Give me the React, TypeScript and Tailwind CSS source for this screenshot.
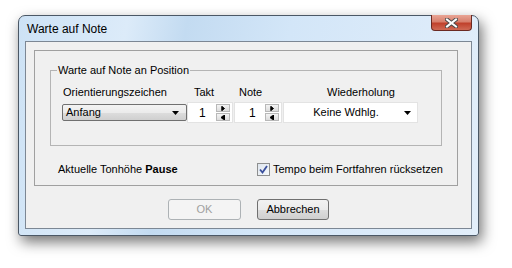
const font = "font-['Liberation_Sans',Arial,sans-serif]";

// kleiner Pfeil für Kombinationsfelder
const DropArrow = () => (
  <svg width="7" height="4" viewBox="0 0 7 4">
    <path d="M0 0 H7 L3.5 4 Z" fill="#000" />
  </svg>
);

const SpinButtons = () => (
  <div className="flex flex-col w-[14px] h-[17px] gap-[1px]">
    <div className="flex-1 border border-[#b8b8b8] bg-[linear-gradient(#f4f4f4,#dcdcdc)] flex items-center justify-center">
      <svg width="4" height="5" viewBox="0 0 4 5">
        <path d="M0 0 V5 M1 0.5 L3.5 2.5 L1 4.5 Z" stroke="#000" strokeWidth="1" fill="#000" />
      </svg>
    </div>
    <div className="flex-1 border border-[#b8b8b8] bg-[linear-gradient(#f4f4f4,#dcdcdc)] flex items-center justify-center">
      <svg width="4" height="5" viewBox="0 0 4 5">
        <path d="M3.5 0 V5 M2.5 0.5 L0 2.5 L2.5 4.5 Z" stroke="#000" strokeWidth="1" fill="#000" />
      </svg>
    </div>
  </div>
);

const SpinBox = ({ value, width, textPad }: { value: string; width: string; textPad: string }) => (
  <div className={`${width} h-[21px] bg-white border border-[#e3e3e3] flex items-center justify-between pr-[2px]`}>
    <span className={`${textPad} text-[12px] leading-[14px]`}>{value}</span>
    <SpinButtons />
  </div>
);

export default function App() {
  return (
    <div className={`w-[512px] h-[268px] bg-white overflow-hidden pt-[15px] pl-[18px] ${font} text-black`}>
      {/* Fenster */}
      <div className="w-[461px] h-[221px] border border-[#4b5866] rounded-t-[7px] rounded-b-[3px] shadow-[3px_6px_14px_rgba(0,0,0,0.55)] bg-[linear-gradient(100deg,#cde2f5_0%,#dcebf9_22%,#c3dbf1_34%,#d3e6f8_55%,#e2eefa_100%)] flex flex-col px-[6px] pb-[6px]">
        {/* Titelleiste */}
        <div className="h-[25px] flex items-start justify-between">
          <span className="ml-[2px] mt-[6px] text-[12px] leading-[14px] text-black">Warte auf Note</span>
          <div className="w-[41px] h-[16px] -mt-[1px] rounded-b-[4px] border border-[#6b2a22] border-t-0 bg-[linear-gradient(#e9a595_0%,#d7806d_45%,#c0412c_55%,#cf6a55_100%)] flex items-center justify-center">
            <svg width="13" height="10" viewBox="0 0 13 10">
              <path d="M2 1.5 L11 8.5 M11 1.5 L2 8.5" stroke="#4a4a4a" strokeWidth="4" strokeLinecap="square" />
              <path d="M2 1.5 L11 8.5 M11 1.5 L2 8.5" stroke="#fff" strokeWidth="2" strokeLinecap="square" />
            </svg>
          </div>
        </div>

        {/* Inhalt */}
        <div className="h-[188px] border border-[#7c8794] bg-[#f0f0f0] flex flex-col">
          <div className="ml-[8px] mt-[8px] w-[424px] h-[136px] border border-[#a0a0a0] flex flex-col">
            <fieldset className="ml-[15px] mt-[13px] w-[392px] h-[82px] border border-[#b4b4b4] pl-[11px]">
              <legend className="ml-[-5px] px-[1px] text-[11px] leading-[13px]">Warte auf Note an Position</legend>
              <div className="mt-[9px] h-[12px] flex text-[11px] leading-[12px]">
                <span className="w-[125px] pl-[1px]">Orientierungszeichen</span>
                <span className="w-[47px] pl-[7px]">Takt</span>
                <span className="w-[49px] pl-[5px]">Note</span>
                <span className="pl-[44px]">Wiederholung</span>
              </div>
              <div className="mt-[4px] h-[21px] flex items-center">
                <div className="w-[125px] h-[17px] rounded-[2px] border border-[#707070] bg-[linear-gradient(#f3f3f3_0%,#ebebeb_50%,#dddddd_51%,#cfcfcf_100%)] flex items-center justify-between pl-[3px] pr-[7px]">
                  <span className="text-[11px] leading-[13px]">Anfang</span>
                  <DropArrow />
                </div>
                <SpinBox value="1" width="w-[46px]" textPad="pl-[11px]" />
                <div className="w-[1px]" />
                <SpinBox value="1" width="w-[48px]" textPad="pl-[14px]" />
                <div className="w-[1px]" />
                <div className="w-[135px] h-[21px] bg-white border border-[#e3e3e3] flex items-center pr-[6px]">
                  <span className="flex-1 text-center text-[11px] leading-[13px] pl-[4px]">Keine Wdhlg.</span>
                  <DropArrow />
                </div>
              </div>
            </fieldset>

            <div className="mt-[16px] h-[14px] flex items-center text-[11px] leading-[13px]">
              <span className="ml-[23px] w-[199px]">
                Aktuelle Tonhöhe <b>Pause</b>
              </span>
              <div className="w-[13px] h-[13px] border border-[#8e8f8f] bg-[linear-gradient(135deg,#dfe6ee,#f5f8fb)] flex items-center justify-center">
                <svg width="9" height="9" viewBox="0 0 9 9">
                  <path d="M1 4.5 L3.5 7.5 L8 1" stroke="#3a4f9c" strokeWidth="1.8" fill="none" />
                </svg>
              </div>
              <span className="ml-[3px]">Tempo beim Fortfahren rücksetzen</span>
            </div>
          </div>

          {/* Schaltflächen */}
          <div className="mt-[13px] ml-[142px] flex gap-[16px] text-[11px]">
            <div className="w-[73px] h-[21px] rounded-[3px] border border-[#adb2b5] bg-[#f4f4f4] text-[#a0a0a0] flex items-center justify-center">
              OK
            </div>
            <div className="w-[72px] h-[21px] rounded-[3px] border border-[#707070] bg-[linear-gradient(#f2f2f2_0%,#ebebeb_50%,#dddddd_51%,#cfcfcf_100%)] flex items-center justify-center">
              Abbrechen
            </div>
          </div>
        </div>
      </div>
    </div>
  );
}
